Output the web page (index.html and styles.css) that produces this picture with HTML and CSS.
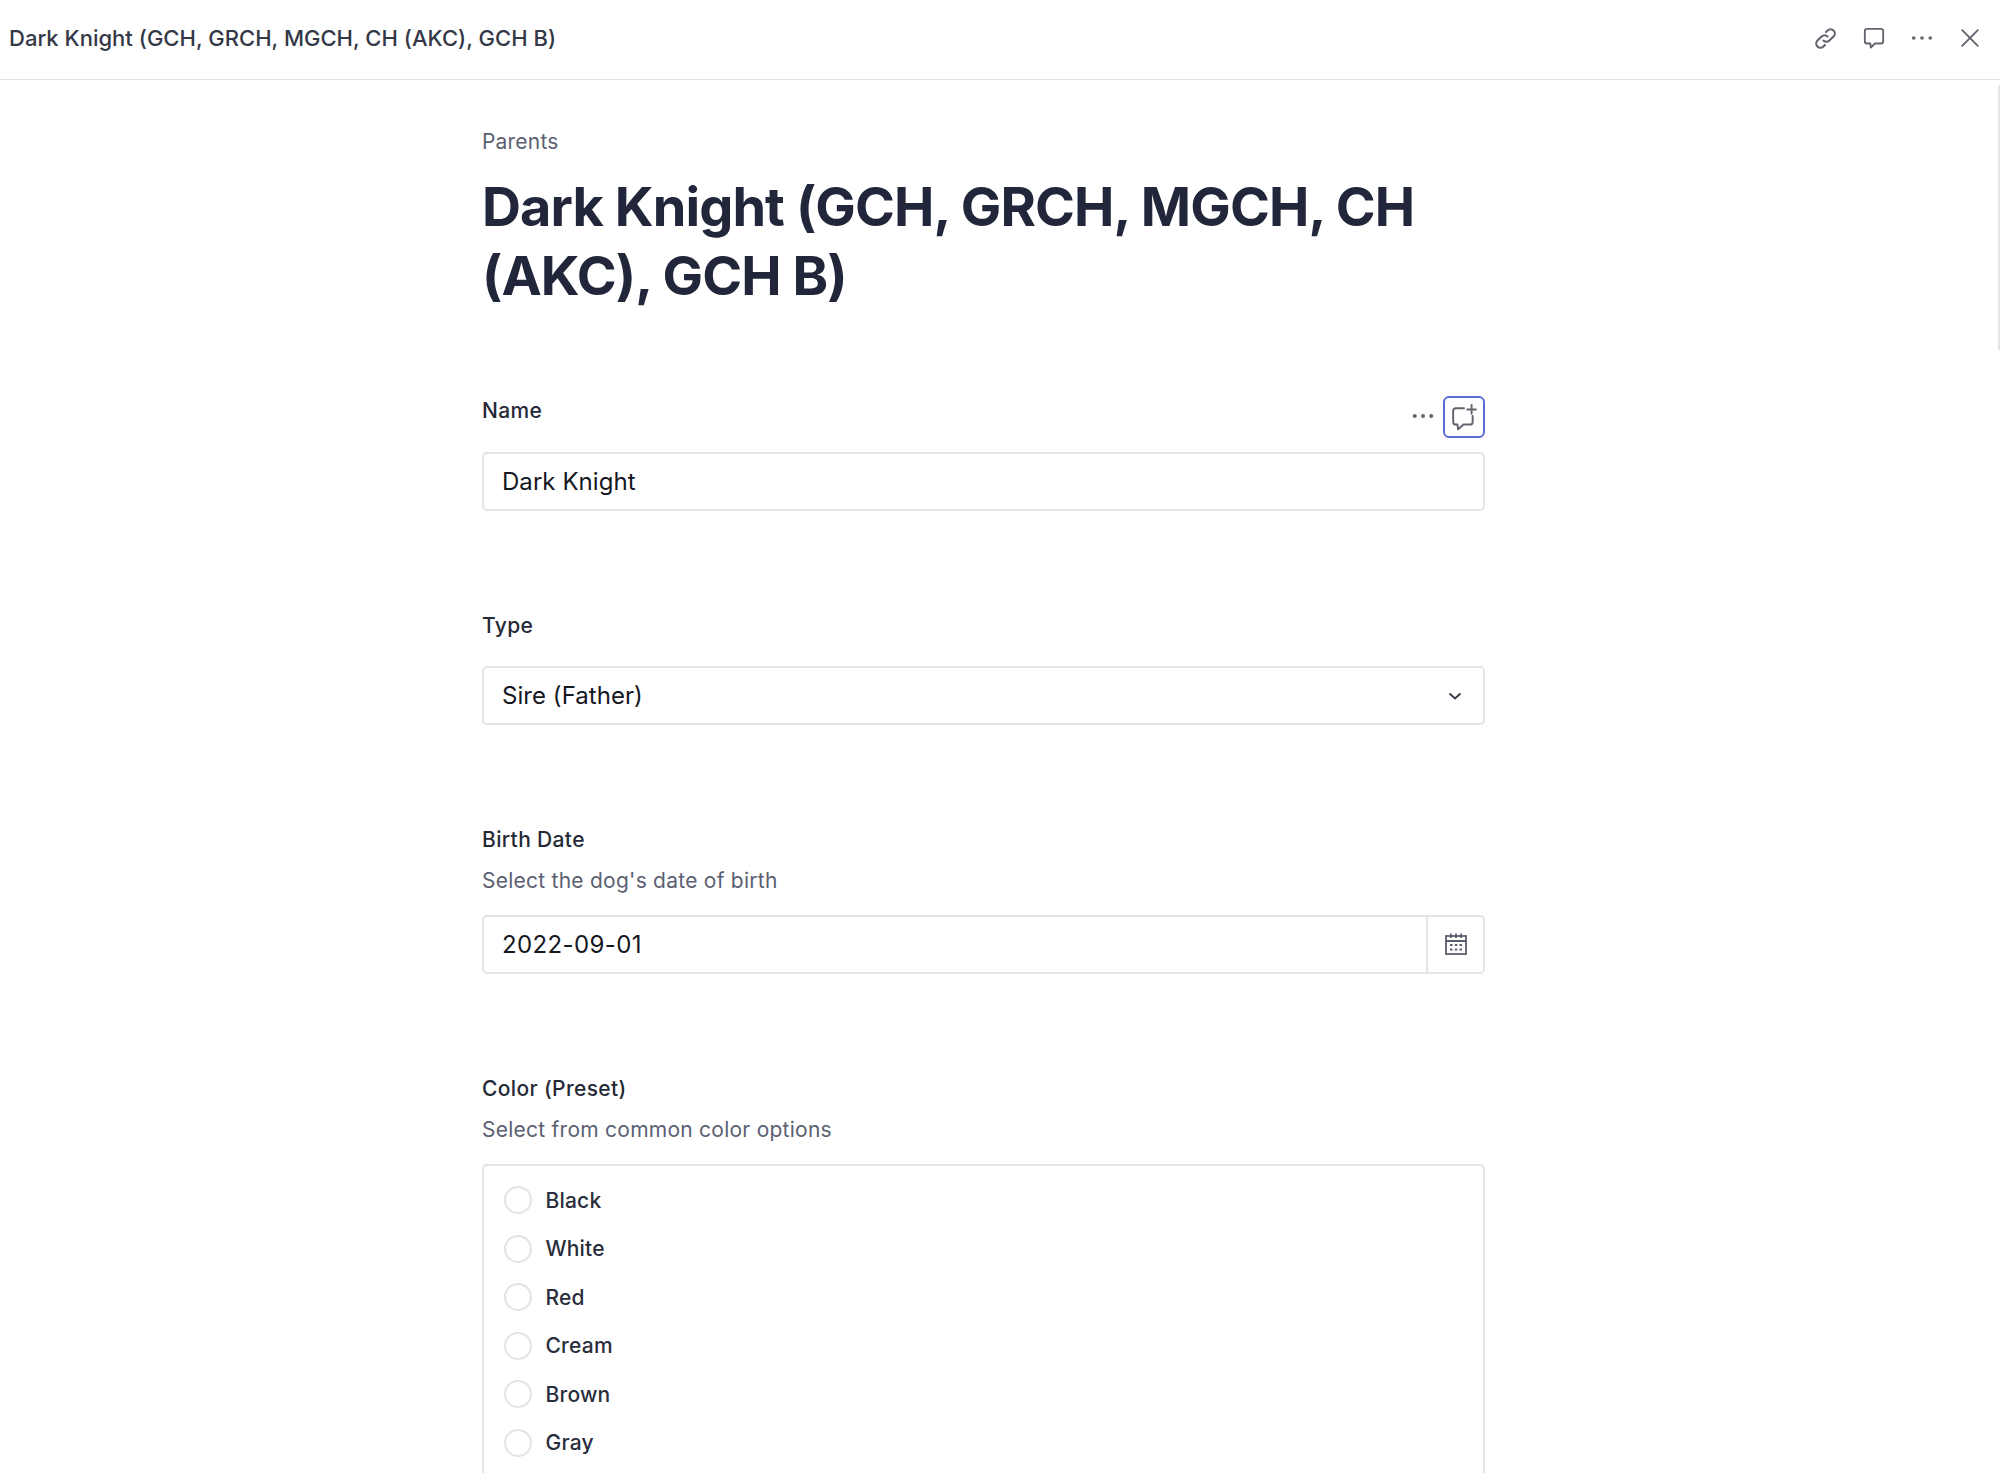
FILE: index.html
```html
<!DOCTYPE html>
<html lang="en">
<head>
  <meta charset="UTF-8">
  <meta name="viewport" content="width=device-width, initial-scale=1.0">
  <title>Dark Knight</title>
  <link rel="stylesheet" href="styles.css">
</head>
<body>
  <header class="topbar">
    <div class="topbar-title">Dark Knight (GCH, GRCH, MGCH, CH (AKC), GCH B)</div>
    <div class="topbar-actions">
      <svg class="icon icon-link" viewBox="0 0 24 24"><path d="M10 14a4 4 0 0 0 5.700 0l4-4a4 4 0 0 0-5.700-5.700l-1.500 1.500"/><path d="M14 10a4 4 0 0 0-5.700 0l-4 4a4 4 0 0 0 5.700 5.700l1.500-1.500"/></svg>
      <svg class="icon" viewBox="0 0 24 24"><path d="M4.500 2h15A2.500 2.500 0 0 1 22 4.500v11a2.500 2.500 0 0 1-2.500 2.500H13l-4.500 4.500-.5-4.500H4.500A2.500 2.500 0 0 1 2 15.500v-11A2.500 2.500 0 0 1 4.500 2z"/></svg>
      <svg class="icon" viewBox="0 0 24 24"><circle class="dot" cx="3" cy="12" r="2"/><circle class="dot" cx="12" cy="12" r="2"/><circle class="dot" cx="21" cy="12" r="2"/></svg>
      <svg class="icon" viewBox="0 0 24 24"><path d="M3.500 3.500l17 17M20.500 3.500l-17 17"/></svg>
    </div>
  </header>

  <div class="scroll-thumb"></div>

  <main class="page">
    <div class="breadcrumb">Parents</div>
    <h1 class="page-title">Dark Knight (GCH, GRCH, MGCH, CH (AKC), GCH B)</h1>

    <section class="field field-name">
      <div class="label-row">
        <label class="label">Name</label>
        <div class="field-tools">
          <svg class="tool-dots" viewBox="0 0 24 6"><circle class="dot" cx="3" cy="3" r="2.200"/><circle class="dot" cx="12" cy="3" r="2.200"/><circle class="dot" cx="21" cy="3" r="2.200"/></svg>
          <button class="comment-btn">
            <svg viewBox="0 0 24 24"><path d="M12 4H4.500A2.500 2.500 0 0 0 2 6.500v10A2.500 2.500 0 0 0 4.500 19H6l.5 4.500L11.500 19h6a2.500 2.500 0 0 0 2.500-2.500V11"/><path d="M19 1v8M15 5h8"/></svg>
          </button>
        </div>
      </div>
      <div class="input">Dark Knight</div>
    </section>

    <section class="field">
      <label class="label">Type</label>
      <div class="input input-select">
        <span>Sire (Father)</span>
        <svg class="chevron" viewBox="0 0 14 8"><path d="M1.500 1.500L7 6.500l5.500-5"/></svg>
      </div>
    </section>

    <section class="field">
      <label class="label">Birth Date</label>
      <p class="hint">Select the dog's date of birth</p>
      <div class="input input-date">
        <span class="date-value">2022-09-01</span>
        <span class="date-btn">
          <svg viewBox="0 0 24 24"><rect x="2" y="4" width="20" height="18"/><path d="M2 9h20M7 1.500V6M12 1.500V6M17 1.500V6"/><path d="M6 13h2.500M10.800 13h2.500M15.500 13h2.500M6 17.500h2.500M10.800 17.500h2.500M15.500 17.500h2.500"/></svg>
        </span>
      </div>
    </section>

    <section class="field">
      <label class="label">Color (Preset)</label>
      <p class="hint">Select from common color options</p>
      <div class="radio-box">
        <div class="radio-row"><span class="radio"></span>Black</div>
        <div class="radio-row"><span class="radio"></span>White</div>
        <div class="radio-row"><span class="radio"></span>Red</div>
        <div class="radio-row"><span class="radio"></span>Cream</div>
        <div class="radio-row"><span class="radio"></span>Brown</div>
        <div class="radio-row"><span class="radio"></span>Gray</div>
      </div>
    </section>
  </main>
</body>
</html>
```

FILE: styles.css
```css
html, body {
  margin: 0;
  height: 1473px;
  overflow: hidden;
}
body {
  font-family: Inter, "Liberation Sans", sans-serif;
  background-color: #fff;
  color: #1f2230;
}
.topbar {
  display: flex;
  align-items: center;
  justify-content: space-between;
  box-sizing: border-box;
  height: 80px;
  padding: 0 19px 3px 9px;
  border-bottom: 1px solid #e2e2e4;
}
.topbar-title {
  font-size: 22px;
  font-weight: 500;
  letter-spacing: 0.02px;
  color: #343847;
}
.topbar-actions {
  display: flex;
  align-items: center;
  gap: 26px;
}
.icon {
  width: 22px;
  height: 22px;
  fill: none;
  stroke: #62646e;
  stroke-width: 2;
  stroke-linecap: round;
  stroke-linejoin: round;
}
.icon-link {
  width: 25px;
  height: 25px;
  margin: 0 -1px 0 -2px;
}
.dot {
  fill: #62646e;
  stroke: none;
}
.scroll-thumb {
  position: absolute;
  top: 85px;
  right: 0;
  width: 2px;
  height: 265px;
  background-color: #e4e4e6;
}
.page {
  width: 1003px;
  margin: 0 auto 0 482px;
  padding-top: 48px;
}
.breadcrumb {
  font-size: 21px;
  line-height: 28px;
  letter-spacing: 0.2px;
  color: #5b6072;
}
.page-title {
  margin: 16px 0 0;
  font-size: 54px;
  line-height: 69px;
  font-weight: 700;
  letter-spacing: -0.9px;
  color: #22263a;
}
.field {
  margin-bottom: 100px;
}
.field-name {
  margin-top: 86px;
}
.label-row {
  display: flex;
  align-items: flex-start;
  justify-content: space-between;
  margin-bottom: 14px;
}
.label {
  display: block;
  padding-top: 1px;
  font-size: 21px;
  line-height: 28px;
  font-weight: 500;
  letter-spacing: 0.35px;
  color: #262936;
  margin-bottom: 13px;
}
.label-row .label {
  margin-bottom: 0;
}
.label + .input {
  margin-top: 26px;
}
.field-tools {
  display: flex;
  align-items: center;
  gap: 9px;
  height: 42px;
}
.tool-dots {
  width: 22px;
  height: 6px;
  margin-top: -2px;
}
.comment-btn {
  width: 42px;
  height: 42px;
  padding: 0;
  display: flex;
  align-items: center;
  justify-content: center;
  background-color: #fff;
  border: 2px solid #5f6bd6;
  border-radius: 6px;
}
.comment-btn svg {
  width: 26px;
  height: 26px;
  fill: none;
  stroke: #62646e;
  stroke-width: 1.800;
  stroke-linecap: round;
  stroke-linejoin: round;
}
.input {
  display: flex;
  align-items: center;
  box-sizing: border-box;
  height: 59px;
  padding: 0 18px;
  border: 2px solid #e4e4e6;
  border-radius: 5px;
  font-size: 24px;
  letter-spacing: 0.05px;
  color: #15171f;
}
.input-select {
  justify-content: space-between;
  padding-right: 21px;
}
.chevron {
  width: 14px;
  height: 8px;
  fill: none;
  stroke: #3a3d4c;
  stroke-width: 2;
}
.hint {
  margin: 0 0 20px;
  font-size: 21px;
  line-height: 28px;
  letter-spacing: 0.25px;
  color: #5b6072;
}
.input-date {
  padding: 0;
}
.date-value {
  flex: 1;
  padding-left: 18px;
  letter-spacing: 0.38px;
}
.date-btn {
  display: flex;
  align-items: center;
  justify-content: center;
  width: 55px;
  height: 100%;
  border-left: 2px solid #e4e4e6;
}
.date-btn svg {
  width: 24px;
  height: 24px;
  margin-top: -2px;
  fill: none;
  stroke: #5b5e6d;
  stroke-width: 1.800;
}
.radio-box {
  box-sizing: border-box;
  height: 420px;
  padding: 10px 20px;
  border: 2px solid #e4e4e6;
  border-radius: 5px;
}
.radio-row {
  display: flex;
  align-items: center;
  gap: 13.500px;
  height: 48.500px;
  font-size: 21px;
  font-weight: 500;
  letter-spacing: 0.2px;
  color: #2a2d3b;
}
.radio {
  box-sizing: border-box;
  width: 28px;
  height: 28px;
  border: 2px solid #e4e4e6;
  border-radius: 50%;
}
```
